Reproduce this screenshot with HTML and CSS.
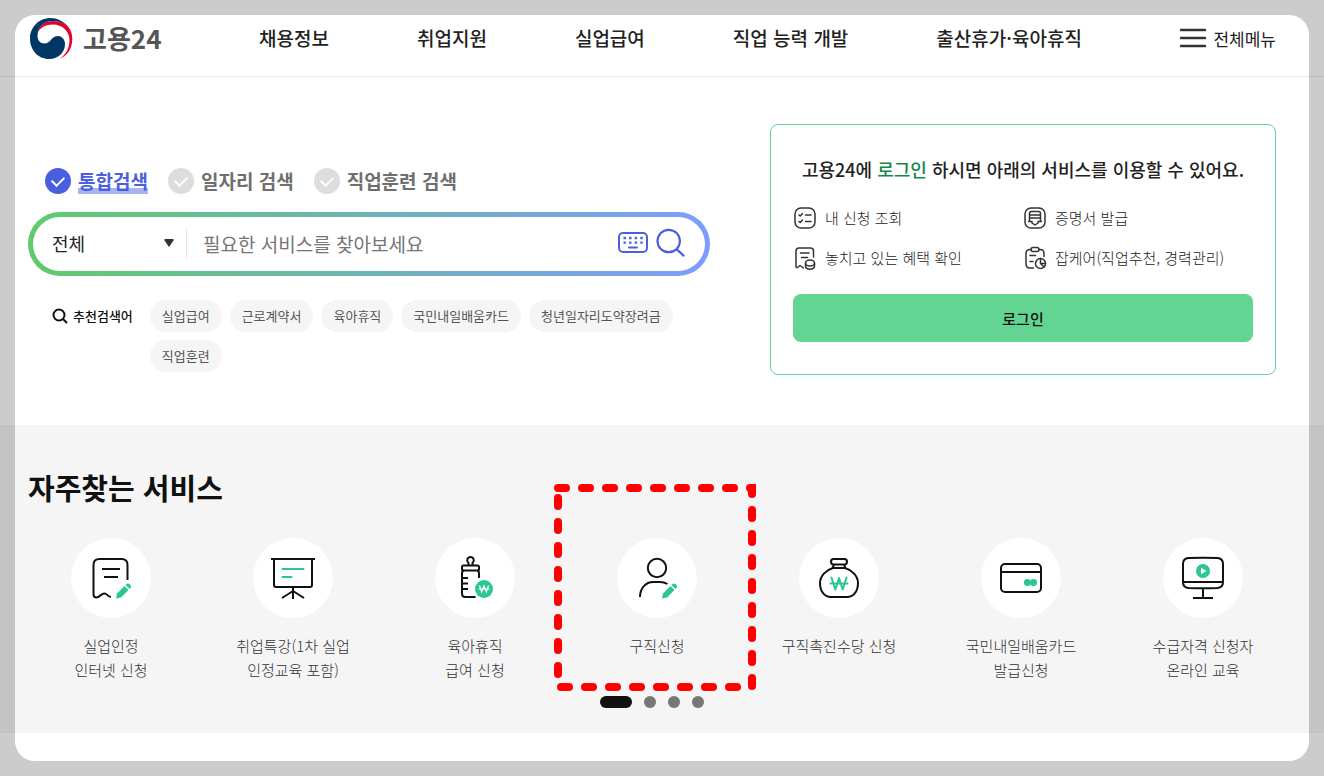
FILE: index.html
```html
<!DOCTYPE html>
<html lang="ko">
<head>
    <meta charset="UTF-8">
    <meta name="viewport" content="width=device-width, initial-scale=1.0">
    <title>고용24</title>
    <link rel="stylesheet" href="styles.css">
</head>
<body>
    <header class="header">
        <a href="#" class="logo">
            <svg width="43" height="41" viewBox="0 0 43 41" aria-hidden="true">
                <path fill="#003764" d="M39 10C34 3 27 0 20.500 0C9 0 0 9 0 20.500C0 32 8 41 19 41C29 41 35 34 35 26C35 21 31.500 18 28 18C21 18 21 25.500 14.500 25.500C10 25.500 7.500 22 7.500 18C7.500 9 14 3 23 3C30 3 35 6 39 10Z"/>
                <path fill="#e4032e" d="M8 14C10 6 16 3 23 3C30 3 35 6 38 8.500C41 12 42.300 16 42.300 21C42.300 31 37 37.500 30 41C36 36 39.500 30 39.500 22C39.500 13 32 6.500 23 6.500C15.500 6.500 10.500 9.500 8 14Z"/>
            </svg>
            <span>고용24</span>
        </a>
        <nav class="nav">
            <a href="#">채용정보</a>
            <a href="#">취업지원</a>
            <a href="#">실업급여</a>
            <a href="#">직업 능력 개발</a>
            <a href="#">출산휴가·육아휴직</a>
        </nav>
        <button type="button" class="all-menu">
            <svg width="28" height="20" viewBox="0 0 28 20" fill="none" stroke="#333" stroke-width="2.400" stroke-linecap="round" aria-hidden="true">
                <path d="M2 2H26M2 10H26M2 18H26"/>
            </svg>
            <span>전체메뉴</span>
        </button>
    </header>

    <main>
        <section class="hero">
            <form class="search">
                <div class="tabs">
                    <label class="tab"><input type="radio" name="kind" checked><span>통합검색</span></label>
                    <label class="tab"><input type="radio" name="kind"><span>일자리 검색</span></label>
                    <label class="tab"><input type="radio" name="kind"><span>직업훈련 검색</span></label>
                </div>
                <div class="search-box">
                    <div class="select-wrap">
                        <select aria-label="검색 범위">
                            <option>전체</option>
                        </select>
                        <svg width="10" height="8" viewBox="0 0 10 8" aria-hidden="true"><path fill="#333" d="M1 0H9Q10 0 9.500 1.200L5.800 7Q5 8 4.200 7L0.500 1.200Q0 0 1 0Z"/></svg>
                    </div>
                    <input type="text" class="search-input" placeholder="필요한 서비스를 찾아보세요" aria-label="검색어">
                    <button type="button" class="icon-button" aria-label="가상 키보드">
                        <svg width="30" height="30" viewBox="0 0 30 30" fill="none" stroke="#4a5fe0" stroke-width="2">
                            <rect x="1" y="5" width="28" height="19" rx="4"/>
                            <path stroke-width="2.400" stroke-dasharray="2.400 3.200" d="M5.500 10H25M5.500 14.600H25"/>
                            <path stroke-linecap="round" d="M11 19.400H19"/>
                        </svg>
                    </button>
                    <button type="submit" class="icon-button" aria-label="검색">
                        <svg width="30" height="30" viewBox="0 0 30 30" fill="none" stroke="#4a5fe0" stroke-width="2.200" stroke-linecap="round">
                            <circle cx="12.700" cy="13" r="11.200"/>
                            <path d="M20.800 21.400L27.500 27.600"/>
                        </svg>
                    </button>
                </div>
                <div class="recommend">
                    <div class="recommend-title">
                        <svg width="16" height="16" viewBox="0 0 16 16" fill="none" stroke="#111" stroke-width="2" aria-hidden="true">
                            <circle cx="7" cy="7" r="5.500"/>
                            <path d="M11 11L15 15"/>
                        </svg>
                        <span>추천검색어</span>
                    </div>
                    <div class="tags">
                        <a href="#">실업급여</a>
                        <a href="#">근로계약서</a>
                        <a href="#">육아휴직</a>
                        <a href="#">국민내일배움카드</a>
                        <a href="#">청년일자리도약장려금</a>
                        <a href="#">직업훈련</a>
                    </div>
                </div>
            </form>

            <div class="login">
                <p class="login-title">고용24에 <strong>로그인</strong> 하시면 아래의 서비스를 이용할 수 있어요.</p>
                <ul class="login-list">
                    <li>
                        <svg class="line-icon" viewBox="0 0 24 24">
                            <rect x="2" y="2" width="20" height="20" rx="6"/>
                            <path d="M6 9L7.200 10L9.500 7.500M6 15.500L7.200 16.500L9.500 14M12.500 9H18M12.500 15.500H18"/>
                        </svg>
                        <span>내 신청 조회</span>
                    </li>
                    <li>
                        <svg class="line-icon" viewBox="0 0 24 24">
                            <rect x="2" y="2" width="20" height="20" rx="6"/>
                            <path d="M6.500 15V7.500Q6.500 5.500 8.500 5.500H15.500Q17.500 5.500 17.500 7.500V15M7 9H17M7 12H17M5.500 15.500H9V17L12 19L15 17V15.500H18.500"/>
                        </svg>
                        <span>증명서 발급</span>
                    </li>
                    <li>
                        <svg class="line-icon" viewBox="0 0 24 24">
                            <path d="M20.500 11V5Q20.500 2 17.500 2H6Q3 2 3 5V20.500Q3 22 4.500 21.500L7 19.500L10.500 22M7.500 7H16M8.500 11.500H14.500"/>
                            <ellipse cx="17" cy="17" rx="4.500" ry="3"/>
                            <path d="M12.500 17V20.500Q13.500 23.200 17 23.200Q20.500 23.200 21.500 20.500V17"/>
                        </svg>
                        <span>놓치고 있는 혜택 확인</span>
                    </li>
                    <li>
                        <svg class="line-icon" viewBox="0 0 24 24">
                            <path d="M8 3.500H7Q3 3.500 3 7.500V18Q3 22 7 22H10.500M16 3.500H17Q21 3.500 21 7.500V10.500M7 9.500H12.500M7 15.500H10"/>
                            <rect x="8" y="1.500" width="8" height="4" rx="2"/>
                            <circle cx="17.500" cy="17.500" r="5"/>
                            <path d="M17.500 12.500V17.500L21 21M17.500 17.500H22.500"/>
                        </svg>
                        <span>잡케어(직업추천, 경력관리)</span>
                    </li>
                </ul>
                <button type="button" class="login-button">로그인</button>
            </div>
        </section>

        <section class="services">
            <h2>자주찾는 서비스</h2>
            <ul class="service-list">
                <li class="service">
                    <a href="#">
                        <span class="circle">
                            <svg viewBox="0 0 48 48">
                                <path d="M40.500 26V11Q40.500 5 34.500 5H12.500Q6.500 5 6.500 11V40Q6.500 43.500 9.500 43.500C12.500 43.500 14 39.500 17.500 39.500C20 39.500 21 43 24 43M15 15H33M17 23H31"/>
                                <g class="green">
                                    <path d="M29 44.500L30 39.500L37.500 32L41.500 36L34 43.500Z"/>
                                    <path d="M38.500 31L40 29.700Q42.500 29 44 32Q44.200 33.500 42.500 35Z"/>
                                </g>
                            </svg>
                        </span>
                        <span>실업인정<br>인터넷 신청</span>
                    </a>
                </li>
                <li class="service">
                    <a href="#">
                        <span class="circle">
                            <svg viewBox="0 0 48 48">
                                <path d="M2 5H46M5 5V31Q5 33 7 33H41Q43 33 43 31V5M24 33V45M24 37L13 44M24 37L35 44"/>
                                <path class="green-line" d="M13.500 15H34.500M13.500 23H22.500"/>
                            </svg>
                        </span>
                        <span>취업특강(1차 실업<br>인정교육 포함)</span>
                    </a>
                </li>
                <li class="service">
                    <a href="#">
                        <span class="circle">
                            <svg viewBox="0 0 48 48">
                                <path d="M17.500 11.500V9Q15.500 7 16.300 5.300Q17.200 3 19.500 3Q21.800 3 22.700 5.300Q23.500 7 21.500 9V11.500"/>
                                <rect x="11" y="11.500" width="17" height="5" rx="1.500"/>
                                <path d="M13 16.500Q11 17 11 19V39.500Q11 43 14.500 43H24.500M26 16.500Q28 17 28 19V24M11 24H17M11 29.500H17M11 35H17"/>
                                <circle class="green" cx="33" cy="35" r="9"/>
                                <path class="white-line" d="M28.500 31.500L30.700 38L33 32L35.300 38L37.500 31.500M27.500 35H38.500"/>
                            </svg>
                        </span>
                        <span>육아휴직<br>급여 신청</span>
                    </a>
                </li>
                <li class="service marked">
                    <a href="#">
                        <span class="circle">
                            <svg viewBox="0 0 48 48">
                                <circle cx="24" cy="14" r="9.200"/>
                                <path d="M7 43C7 34 13 28 20 28H27Q31 28 34.500 30"/>
                                <g class="green">
                                    <path d="M29 44.500L30 39.500L37.500 32L41.500 36L34 43.500Z"/>
                                    <path d="M38.500 31L40 29.700Q42.500 29 44 32Q44.200 33.500 42.500 35Z"/>
                                </g>
                            </svg>
                        </span>
                        <span>구직신청</span>
                    </a>
                    <svg class="marker" viewBox="0 0 202 207" aria-hidden="true">
                        <path d="M4 4H198V203H4Z"/>
                    </svg>
                </li>
                <li class="service">
                    <a href="#">
                        <span class="circle">
                            <svg viewBox="0 0 48 48">
                                <path d="M18.500 5H29.500Q32 5 32 7.500Q32 10.500 29.500 10.500H18.500Q16 10.500 16 7.500Q16 5 18.500 5ZM19 10.500L17.500 14M29 10.500L30.500 14M18 14H30C37 16 43 22 43 29C43 38 38 43 32 43H16C10 43 5 38 5 29C5 22 11 16 18 14Z"/>
                                <path class="green-line" stroke-linejoin="round" d="M16.500 23.500L20.300 35.500L24 24L27.700 35.500L31.500 23.500M15.500 29.500H32.500"/>
                            </svg>
                        </span>
                        <span>구직촉진수당 신청</span>
                    </a>
                </li>
                <li class="service">
                    <a href="#">
                        <span class="circle">
                            <svg viewBox="0 0 48 48">
                                <rect x="4" y="10" width="40" height="28" rx="4"/>
                                <path d="M4 18H44"/>
                                <g class="green">
                                    <circle cx="30.500" cy="28.500" r="3.600"/>
                                    <circle cx="36.500" cy="28.500" r="3.600"/>
                                </g>
                            </svg>
                        </span>
                        <span>국민내일배움카드<br>발급신청</span>
                    </a>
                </li>
                <li class="service">
                    <a href="#">
                        <span class="circle">
                            <svg viewBox="0 0 48 48">
                                <path d="M9.500 4Q24 3.500 38.500 4Q44 4.300 44 10V28Q44 33.500 38.500 34Q24 34.500 9.500 34Q4 33.500 4 28V10Q4 4.300 9.500 4ZM4 28H44M24 34V44M14 44H34"/>
                                <circle class="green" cx="24" cy="17" r="7"/>
                                <path class="white" d="M22 13.800L27.500 17L22 20.200Z"/>
                            </svg>
                        </span>
                        <span>수급자격 신청자<br>온라인 교육</span>
                    </a>
                </li>
            </ul>
            <div class="pager">
                <button type="button" class="active" aria-label="1"></button>
                <button type="button" aria-label="2"></button>
                <button type="button" aria-label="3"></button>
                <button type="button" aria-label="4"></button>
            </div>
        </section>
    </main>
    <div class="frame"></div>
</body>
</html>
```
FILE: styles.css
```css
* {
    box-sizing: border-box;
}
body {
    margin: 0;
    min-height: 100vh;
    background: #fff;
    color: #222;
    font-family: "Noto Sans CJK KR", sans-serif;
    font-size: 15px;
    line-height: 24px;
}
a {
    color: inherit;
    text-decoration: none;
}
button, input, select {
    font-family: inherit;
    color: inherit;
}
button {
    padding: 0;
    border: none;
    background: none;
    cursor: pointer;
}
ul {
    margin: 0;
    padding: 0;
    list-style: none;
}

/* header */
.header {
    display: flex;
    align-items: center;
    justify-content: space-between;
    height: 77px;
    padding: 0 48px 0 30px;
    border-bottom: 1px solid #ebebeb;
}
.logo {
    display: flex;
    align-items: center;
    gap: 10px;
    color: #555;
    font-size: 26px;
    font-weight: 700;
}
.nav {
    display: flex;
    gap: 88px;
    font-size: 19px;
    font-weight: 500;
}
.all-menu {
    display: flex;
    align-items: center;
    gap: 6px;
    font-size: 17px;
    font-weight: 400;
}

/* search */
.hero {
    display: grid;
    grid-template-columns: 1fr 506px;
    gap: 60px;
    padding: 47px 48px 50px 28px;
}
.search {
    padding-top: 44px;
}
.tabs {
    display: flex;
    gap: 20px;
    padding-left: 17px;
    margin-bottom: 18px;
}
.tab {
    display: flex;
    align-items: center;
    gap: 7px;
    height: 26px;
    color: #6f6f6f;
    font-size: 19px;
    font-weight: 700;
    line-height: 26px;
    cursor: pointer;
}
.tab input {
    display: grid;
    place-items: center;
    width: 26px;
    height: 26px;
    margin: 0;
    border-radius: 50%;
    background: #ddd;
    appearance: none;
}
.tab input::before {
    content: "";
    width: 10px;
    height: 6px;
    margin-bottom: 3px;
    border: solid #fff;
    border-width: 0 0 2px 2px;
    transform: rotate(-45deg);
}
.tab input:checked {
    background: #4a5fe0;
}
.tab input:checked + span {
    color: #4a5fe0;
    background: linear-gradient(#a8b3f1, #a8b3f1) bottom / 100% 6px no-repeat;
}
.search-box {
    display: flex;
    align-items: center;
    height: 64px;
    padding: 0 19px 2px;
    border: 5px solid transparent;
    border-radius: 32px;
    background: linear-gradient(#fff, #fff) padding-box, linear-gradient(90deg, #5fcb6c, #7d9dff) border-box;
}
.select-wrap {
    display: grid;
    align-items: center;
    width: 135px;
    height: 30px;
    padding-right: 12px;
    border-right: 1px solid #e6e6e6;
}
.select-wrap select,
.select-wrap svg {
    grid-area: 1 / 1;
}
.select-wrap svg {
    justify-self: end;
    pointer-events: none;
}
.select-wrap select {
    height: 30px;
    padding: 0;
    border: none;
    background: none;
    font-size: 18px;
    appearance: none;
}
.search-input {
    flex: 1;
    min-width: 0;
    height: 40px;
    padding: 0 16px;
    border: none;
    background: none;
    font-size: 19px;
    outline: none;
}
.search-input::placeholder {
    color: #757575;
}
.icon-button {
    display: flex;
    margin-left: 8px;
}
.recommend {
    display: flex;
    gap: 17px;
    padding-left: 24px;
    margin-top: 24px;
    font-size: 13px;
}
.recommend-title {
    display: flex;
    flex-shrink: 0;
    align-items: center;
    gap: 5px;
    height: 32px;
    color: #111;
    font-weight: 500;
}
.tags {
    display: flex;
    flex-wrap: wrap;
    gap: 8px;
}
.tags a {
    height: 32px;
    padding: 0 12px;
    border-radius: 16px;
    background: #f5f5f5;
    color: #555;
    line-height: 32px;
}

/* login */
.login {
    padding: 32px 22px;
    border: 1px solid #63d593;
    border-radius: 8px;
}
.login-title {
    margin: 0 0 25px;
    font-size: 18px;
    font-weight: 500;
    text-align: center;
}
.login-title strong {
    color: #12874a;
    font-weight: 500;
}
.login-list {
    display: grid;
    grid-template-columns: 1fr 1fr;
    gap: 16px 0;
    margin-bottom: 24px;
    font-weight: 300;
}
.login-list li {
    display: flex;
    align-items: center;
    gap: 8px;
}
.line-icon {
    width: 24px;
    height: 24px;
    fill: none;
    stroke: #333;
    stroke-width: 1.5;
    stroke-linecap: round;
    stroke-linejoin: round;
}
.login-button {
    width: 100%;
    height: 48px;
    border-radius: 8px;
    background: #63d593;
    color: #111;
    font-size: 15px;
    font-weight: 500;
}

/* services */
.services {
    padding: 42px 30px 25px 20px;
    background: #f5f5f5;
}
.services h2 {
    margin: 0 8px 31px;
    color: #111;
    font-size: 29px;
    font-weight: 700;
    line-height: 40px;
}
.service-list {
    display: grid;
    grid-template-columns: repeat(7, 1fr);
}
.service {
    color: #333;
    font-weight: 300;
    text-align: center;
}
.service a {
    display: flex;
    flex-direction: column;
    align-items: center;
    gap: 16px;
}
.circle {
    display: grid;
    place-items: center;
    width: 80px;
    height: 80px;
    border-radius: 50%;
    background: #fff;
}
.circle svg {
    width: 48px;
    height: 48px;
    fill: none;
    stroke: #111;
    stroke-width: 2;
}
.circle .green {
    fill: #2ac78e;
    stroke: none;
}
.circle .green-line {
    stroke: #2ac78e;
    stroke-width: 2;
    stroke-linecap: round;
}
.circle .white {
    fill: #fff;
    stroke: none;
}
.circle .white-line {
    stroke: #fff;
    stroke-width: 1.2;
}
.marked {
    position: relative;
}
.marker {
    position: absolute;
    top: -54px;
    left: calc(50% - 103px);
    width: 202px;
    height: 207px;
    fill: none;
    stroke: #f00;
    stroke-width: 8;
    stroke-linecap: round;
    stroke-dasharray: 8 16;
    pointer-events: none;
}
.pager {
    display: flex;
    justify-content: center;
    gap: 12px;
    margin: 14px 10px 0 0;
}
.pager button {
    width: 12px;
    height: 12px;
    border-radius: 6px;
    background: #767676;
}
.pager .active {
    width: 32px;
    background: #111;
}

/* dimmed edge around the whole window */
.frame {
    position: fixed;
    inset: 15px;
    border-radius: 20px;
    box-shadow: 0 0 0 40px rgba(0, 0, 0, 0.2);
    pointer-events: none;
}
```
